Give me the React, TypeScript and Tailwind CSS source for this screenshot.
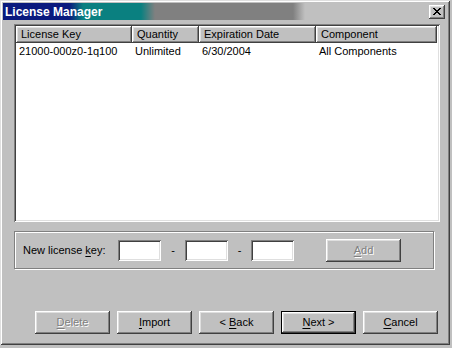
import React from 'react';

const raised =
  'shadow-[inset_-1px_-1px_#404040,inset_1px_1px_#ffffff,inset_-2px_-2px_#808080,inset_2px_2px_#dfdfdf]';
const sunken =
  'shadow-[inset_1px_1px_#808080,inset_-1px_-1px_#ffffff,inset_2px_2px_#404040,inset_-2px_-2px_#dfdfdf]';

type BtnProps = { label: string; mnemonic: number; disabled?: boolean; isDefault?: boolean };

const Btn: React.FC<BtnProps> = ({ label, mnemonic, disabled, isDefault }) => {
  const before = label.slice(0, mnemonic);
  const key = label.charAt(mnemonic);
  const after = label.slice(mnemonic + 1);
  const text = (
    <span
      className={
        disabled
          ? 'text-[#808080] [text-shadow:1px_1px_0_#ffffff]'
          : 'text-black'
      }
    >
      {before}
      <span className="underline underline-offset-[2px]">{key}</span>
      {after}
    </span>
  );
  if (isDefault) {
    return (
      <div className="w-[75px] h-[23px] border border-black bg-[#c0c0c0]">
        <div className={`w-full h-full flex items-center justify-center text-[11px] ${raised}`}>{text}</div>
      </div>
    );
  }
  return (
    <div className={`w-[75px] h-[23px] flex items-center justify-center bg-[#c0c0c0] text-[11px] ${raised}`}>
      {text}
    </div>
  );
};

const columns = [
  { title: 'License Key', w: 'w-[116px]', value: '21000-000z0-1q100' },
  { title: 'Quantity', w: 'w-[67px]', value: 'Unlimited' },
  { title: 'Expiration Date', w: 'w-[117px]', value: '6/30/2004' },
  { title: 'Component', w: 'w-[121px]', value: 'All Components' },
];

export default function App() {
  return (
    <div className="w-[452px] h-[348px] bg-[#c0c0c0] font-['Liberation_Sans',Arial,sans-serif]">
      <div
        className={`w-[450px] h-[345px] p-[3px] flex flex-col bg-[#c0c0c0] shadow-[inset_1px_1px_#dfdfdf,inset_-1px_-1px_#404040,inset_2px_2px_#ffffff,inset_-2px_-2px_#808080]`}
      >
        {/* title bar */}
        <div className="h-[17px] flex items-center justify-between pl-[2px] pr-[2px] bg-[linear-gradient(to_right,#0a1a7e_0px,#0a1a7e_66px,#0a8080_80px,#0a8080_138px,#808080_152px,#808080_290px,#c0c0c0_302px)]">
          <span className="text-white font-bold text-[12px] leading-none">License Manager</span>
          <div className={`w-[16px] h-[14px] bg-[#c0c0c0] flex items-center justify-center ${raised}`}>
            <svg width="8" height="7" viewBox="0 0 8 7">
              <path d="M0 0h2v1h1v1h2V1h1V0h2v1H7v1H6v1H5v1h1v1h1v1h1v1H6V6H5V5H3v1H2v1H0V6h1V5h1V4h1V3H2V2H1V1H0z" fill="#000" />
            </svg>
          </div>
        </div>

        <div className="flex flex-col pl-[11px]">
          {/* list view */}
          <div className={`mt-[4px] w-[426px] h-[198px] bg-white p-[2px] ${sunken}`}>
            <div className="flex h-[17px]">
              {columns.map((c) => (
                <div
                  key={c.title}
                  className={`${c.w} h-full bg-[#c0c0c0] flex items-center pl-[5px] text-[11px] text-black ${raised}`}
                >
                  {c.title}
                </div>
              ))}
            </div>
            <div className="flex h-[16px] items-center">
              {columns.map((c) => (
                <div key={c.title} className={`${c.w} pl-[3px] text-[11px] text-black whitespace-nowrap`}>
                  {c.value}
                </div>
              ))}
            </div>
          </div>

          {/* group box */}
          <div className="mt-[9px] w-[420px] h-[38px] border border-[#808080] shadow-[inset_1px_1px_#ffffff,1px_1px_#ffffff] flex items-center pl-[8px]">
            <span className="w-[95px] text-[11px] text-black">
              New license <span className="underline underline-offset-[2px]">k</span>ey:
            </span>
            <div className={`w-[43px] h-[21px] bg-white ${sunken}`} />
            <span className="w-[24px] text-center text-[11px] text-black">-</span>
            <div className={`w-[43px] h-[21px] bg-white ${sunken}`} />
            <span className="w-[23px] text-center text-[11px] text-black">-</span>
            <div className={`w-[43px] h-[21px] bg-white ${sunken}`} />
            <div className="ml-[32px]">
              <Btn label="Add" mnemonic={0} disabled />
            </div>
          </div>

          {/* bottom buttons */}
          <div className="mt-[42px] ml-[21px] flex gap-[7px]">
            <Btn label="Delete" mnemonic={0} disabled />
            <Btn label="Import" mnemonic={0} />
            <Btn label="< Back" mnemonic={2} />
            <Btn label="Next >" mnemonic={0} isDefault />
            <Btn label="Cancel" mnemonic={0} />
          </div>
        </div>
      </div>
    </div>
  );
}
